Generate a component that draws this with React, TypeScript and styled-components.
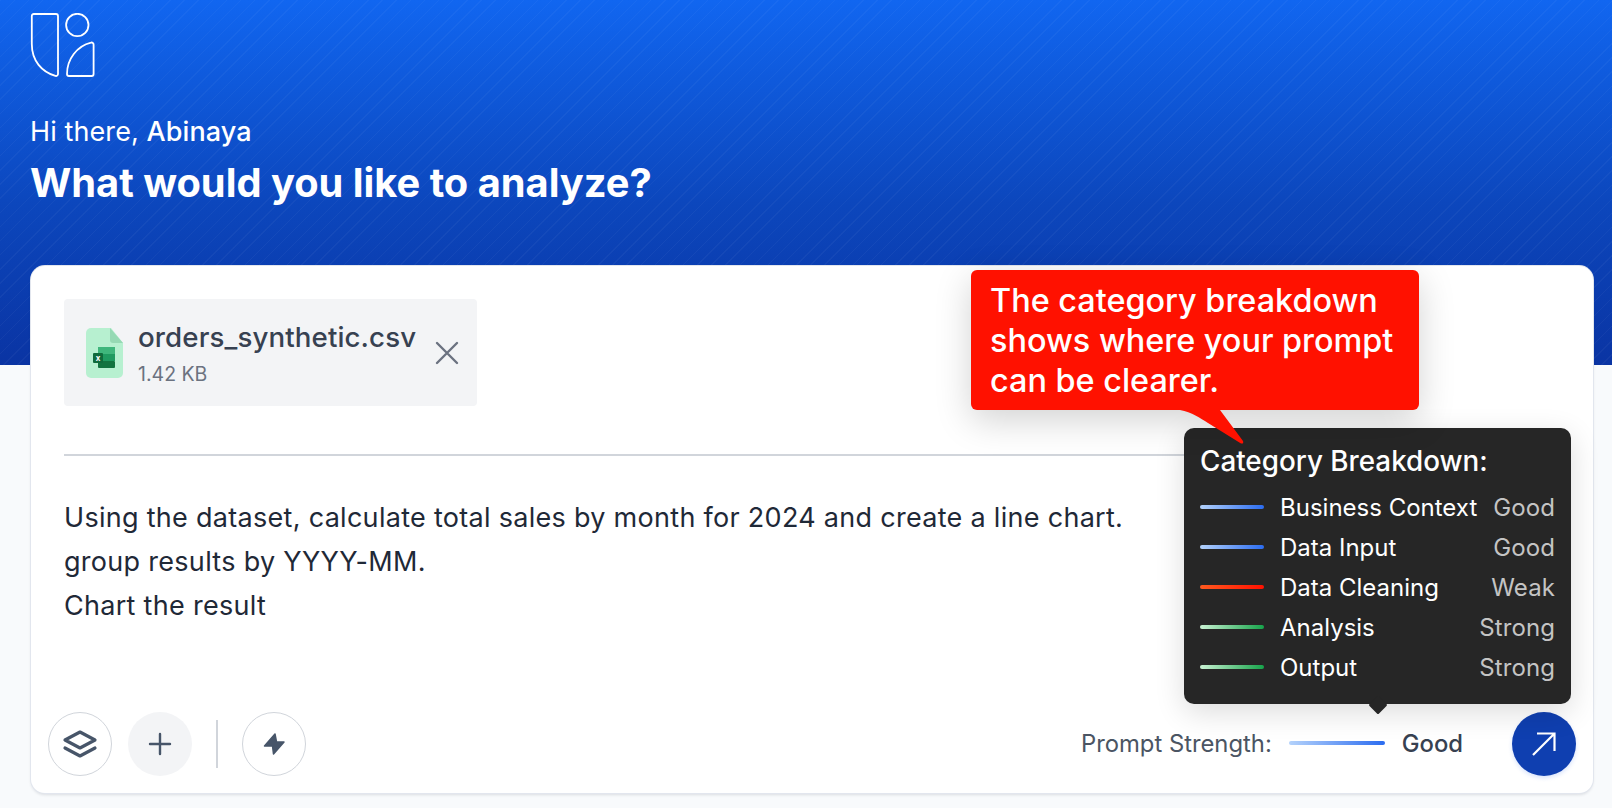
import styled, { createGlobalStyle } from 'styled-components'

const GlobalStyle = createGlobalStyle`
  html, body {
    margin: 0;
    padding: 0;
    background: #f8fafc;
    font-family: Inter, 'Liberation Sans', sans-serif;
    overflow: hidden;
  }
`

const Page = styled.div`
  width: 1612px;
  height: 808px;
  overflow: hidden;
  position: relative;
`

const Hero = styled.header`
  height: 365px;
  box-sizing: border-box;
  padding: 13px 30px 0;
  color: #fff;
  background:
    repeating-linear-gradient(
      135deg,
      rgba(255, 255, 255, 0.035) 0 1px,
      rgba(255, 255, 255, 0) 1px 10px
    ),
    linear-gradient(180deg, #1166f0 0%, #0c47bd 55%, #0a34a3 100%);
`

const Greeting = styled.div`
  margin-top: 37px;
  font-size: 27px;
  line-height: 34px;
  font-weight: 400;
  letter-spacing: 0.1px;

  b {
    font-weight: 500;
  }
`

const Headline = styled.h1`
  margin: 10px 0 0;
  font-size: 39.8px;
  line-height: 48px;
  font-weight: 700;
`

const Card = styled.main`
  position: relative;
  box-sizing: border-box;
  height: 527px;
  margin: -99px 19px 0 31px;
  padding: 33px 33px 17px;
  background: #fff;
  border-radius: 14px;
  box-shadow: 0 0 0 1px #e2e6ee, 0 2px 3px rgba(15, 23, 42, 0.12);
  display: flex;
  flex-direction: column;
`

const FileChip = styled.div`
  width: 413px;
  height: 107px;
  box-sizing: border-box;
  padding: 0 18px 0 22px;
  background: #f3f4f6;
  border-radius: 4px;
  display: flex;
  align-items: center;
  gap: 15px;
`

const FileMeta = styled.div`
  flex: 1;
  display: flex;
  flex-direction: column;
  gap: 7px;
  padding-top: 1px;
`

const FileName = styled.span`
  font-size: 27.7px;
  line-height: 34px;
  font-weight: 500;
  color: #374151;
  letter-spacing: 0.1px;
`

const FileSize = styled.span`
  font-size: 19.5px;
  line-height: 26px;
  color: #6b7280;
`

const Divider = styled.hr`
  margin: 48px 0 0;
  border: 0;
  height: 2px;
  background: #d1d5db;
`

const Prompt = styled.p`
  margin: 40px 0 0;
  font-size: 27px;
  line-height: 44px;
  letter-spacing: 0.29px;
  color: #1f2937;
`

const Toolbar = styled.div`
  margin-top: auto;
  margin-left: -16px;
  margin-right: -16px;
  display: flex;
  align-items: center;
  gap: 16px;
`

const RoundButton = styled.button<{ $variant: 'outline' | 'soft' }>`
  width: 64px;
  height: 64px;
  padding: 0;
  border-radius: 50%;
  box-sizing: border-box;
  display: flex;
  align-items: center;
  justify-content: center;
  color: #475569;
  background: ${(p) => (p.$variant === 'soft' ? '#f3f4f6' : '#fff')};
  border: ${(p) => (p.$variant === 'soft' ? '0' : '1.5px solid #d1d5db')};
`

const ToolbarRule = styled.span`
  width: 2px;
  height: 48px;
  margin: 0 8px;
  background: #d1d5db;
`

const Strength = styled.div`
  margin-left: auto;
  margin-right: 33px;
  padding-bottom: 2px;
  display: flex;
  align-items: center;
  font-size: 23.8px;
  color: #4b5563;
`

const StrengthBar = styled.span`
  width: 96px;
  height: 4px;
  margin: 0 17px;
  border-radius: 2px;
  background: linear-gradient(90deg, #b4d2fb, #2b6cf0);
`

const StrengthValue = styled.span`
  font-weight: 500;
  color: #374151;
`

const SendButton = styled.button`
  width: 64px;
  height: 64px;
  padding: 0;
  border: 0;
  border-radius: 50%;
  color: #fff;
  background: #0f3fb0;
  box-shadow: 0 2px 4px rgba(37, 99, 235, 0.18);
  display: flex;
  align-items: center;
  justify-content: center;
`

const Breakdown = styled.aside`
  position: absolute;
  left: 1153px;
  top: 162px;
  width: 387px;
  height: 276px;
  box-sizing: border-box;
  padding: 16px 16px 0;
  background: #262626;
  border-radius: 10px;
  color: #fff;
  box-shadow: 0 8px 30px rgba(0, 0, 0, 0.14);

  &::after {
    content: '';
    position: absolute;
    left: 185px;
    bottom: -10px;
    width: 18px;
    height: 18px;
    background: #262626;
    transform: rotate(45deg) scale(0.75);
    border-radius: 2px;
  }
`

const BreakdownTitle = styled.div`
  font-size: 27.8px;
  line-height: 34px;
  font-weight: 500;
  margin-bottom: 9px;
`

const BreakdownRow = styled.div`
  height: 40px;
  display: flex;
  align-items: center;
  font-size: 24px;
`

const ScoreBar = styled.span<{ $from: string; $to: string }>`
  width: 64px;
  height: 4px;
  margin-right: 16px;
  border-radius: 2px;
  background: linear-gradient(90deg, ${(p) => p.$from}, ${(p) => p.$to});
`

const RowValue = styled.span`
  margin-left: auto;
  color: #c4c4c4;
  letter-spacing: 0.1px;
`

const Callout = styled.div`
  position: absolute;
  left: 940px;
  top: 4px;
  width: 448px;
  height: 140px;
  box-sizing: border-box;
  padding: 11px 19px;
  background: #ff1100;
  border-radius: 6px;
  color: #fff;
  font-size: 32.4px;
  line-height: 40px;
  font-weight: 500;
  box-shadow: 0 10px 36px rgba(0, 0, 0, 0.18);
`

const CalloutTail = styled.svg`
  position: absolute;
  left: 209px;
  top: 139px;
`

const LogoMark = styled.svg`
  display: block;
`

const breakdown = [
  { label: 'Business Context', value: 'Good', from: '#b4d2fb', to: '#2b6cf0' },
  { label: 'Data Input', value: 'Good', from: '#b4d2fb', to: '#2b6cf0' },
  { label: 'Data Cleaning', value: 'Weak', from: '#ff5a1f', to: '#ff1100' },
  { label: 'Analysis', value: 'Strong', from: '#c9f2d3', to: '#16a34a' },
  { label: 'Output', value: 'Strong', from: '#c9f2d3', to: '#16a34a' },
]

const Logo = () => (
  <LogoMark width="65" height="65" viewBox="-1 0 65 65" fill="none" stroke="#fff" strokeWidth="1.800">
    <path d="M3 1h22a2 2 0 0 1 2 2v58a2 2 0 0 1-2.600 1.900C11 59 0.800 48 0.800 31V3A2 2 0 0 1 3 1z" />
    <circle cx="46.300" cy="12" r="11.200" />
    <path d="M60 29.600a2 2 0 0 1 2.600 2V61a2 2 0 0 1-2 2H38a2 2 0 0 1-2-2c0-15 10-28 24-31.400z" />
  </LogoMark>
)

const ExcelFile = () => (
  <svg width="37" height="50" viewBox="0 0 37 50">
    <path d="M5 0h20l12 15v30a5 5 0 0 1-5 5H5a5 5 0 0 1-5-5V5a5 5 0 0 1 5-5z" fill="#b7f0d0" />
    <path d="M24 0l13 15H27a3 3 0 0 1-3-3z" fill="#96d9b4" />
    <rect x="12" y="19" width="17" height="7" fill="#3fb67c" />
    <rect x="12" y="26" width="17" height="7" fill="#1f9a60" />
    <rect x="12" y="33" width="17" height="7" rx="1" fill="#12733f" />
    <rect x="7" y="25" width="10" height="10" rx="1" fill="#0f6b3c" />
    <text x="12" y="33" textAnchor="middle" fontSize="8" fontWeight="700" fill="#fff" fontFamily="Inter, sans-serif">x</text>
  </svg>
)

const CloseIcon = () => (
  <svg width="24" height="24" viewBox="0 0 24 24" stroke="#6b7280" strokeWidth="2.400" strokeLinecap="round">
    <path d="M2 2l20 20M22 2L2 22" />
  </svg>
)

const LayersIcon = () => (
  <svg width="36" height="30" viewBox="0 0 36 30" fill="none" stroke="currentColor" strokeWidth="3.200" strokeLinejoin="round" strokeLinecap="round">
    <path d="M18 3L33 11 18 19 3 11z" />
    <path d="M3 19l15 8 15-8" />
  </svg>
)

const PlusIcon = () => (
  <svg width="24" height="24" viewBox="0 0 24 24" stroke="currentColor" strokeWidth="2.400" strokeLinecap="round">
    <path d="M12 2v20M2 12h20" />
  </svg>
)

const BoltIcon = () => (
  <svg width="24" height="24" viewBox="0 0 24 24" fill="currentColor" stroke="currentColor" strokeWidth="1.500" strokeLinejoin="round">
    <path d="M13 2L2.500 14H10.500L11.500 22 22 10H14.500z" />
  </svg>
)

const ArrowIcon = () => (
  <svg width="26" height="26" viewBox="0 0 26 26" fill="none" stroke="currentColor" strokeWidth="2.200">
    <path d="M2 24L23 3M6 2.500h17.500V20" />
  </svg>
)

const App = () => {
  return (
    <Page>
      <GlobalStyle />
      <Hero>
        <Logo />
        <Greeting>
          Hi there, <b>Abinaya</b>
        </Greeting>
        <Headline>What would you like to analyze?</Headline>
      </Hero>
      <Card>
        <FileChip>
          <ExcelFile />
          <FileMeta>
            <FileName>orders_synthetic.csv</FileName>
            <FileSize>1.42 KB</FileSize>
          </FileMeta>
          <CloseIcon />
        </FileChip>
        <Divider />
        <Prompt>
          Using the dataset, calculate total sales by month for 2024 and create a line chart.
          <br />
          group results by YYYY-MM.
          <br />
          Chart the result
        </Prompt>
        <Toolbar>
          <RoundButton $variant="outline">
            <LayersIcon />
          </RoundButton>
          <RoundButton $variant="soft">
            <PlusIcon />
          </RoundButton>
          <ToolbarRule />
          <RoundButton $variant="outline">
            <BoltIcon />
          </RoundButton>
          <Strength>
            Prompt Strength:
            <StrengthBar />
            <StrengthValue>Good</StrengthValue>
          </Strength>
          <SendButton>
            <ArrowIcon />
          </SendButton>
        </Toolbar>
        <Breakdown>
          <BreakdownTitle>Category Breakdown:</BreakdownTitle>
          {breakdown.map((row) => (
            <BreakdownRow key={row.label}>
              <ScoreBar $from={row.from} $to={row.to} />
              {row.label}
              <RowValue>{row.value}</RowValue>
            </BreakdownRow>
          ))}
        </Breakdown>
        <Callout>
          The category breakdown shows where your prompt can be clearer.
          <CalloutTail width="66" height="36" viewBox="0 0 66 36">
            <path d="M0 1h40l23 31q1 3-2 2.500L28 14C20 9 12 3 0 1z" fill="#ff1100" />
          </CalloutTail>
        </Callout>
      </Card>
    </Page>
  )
}

export default App
